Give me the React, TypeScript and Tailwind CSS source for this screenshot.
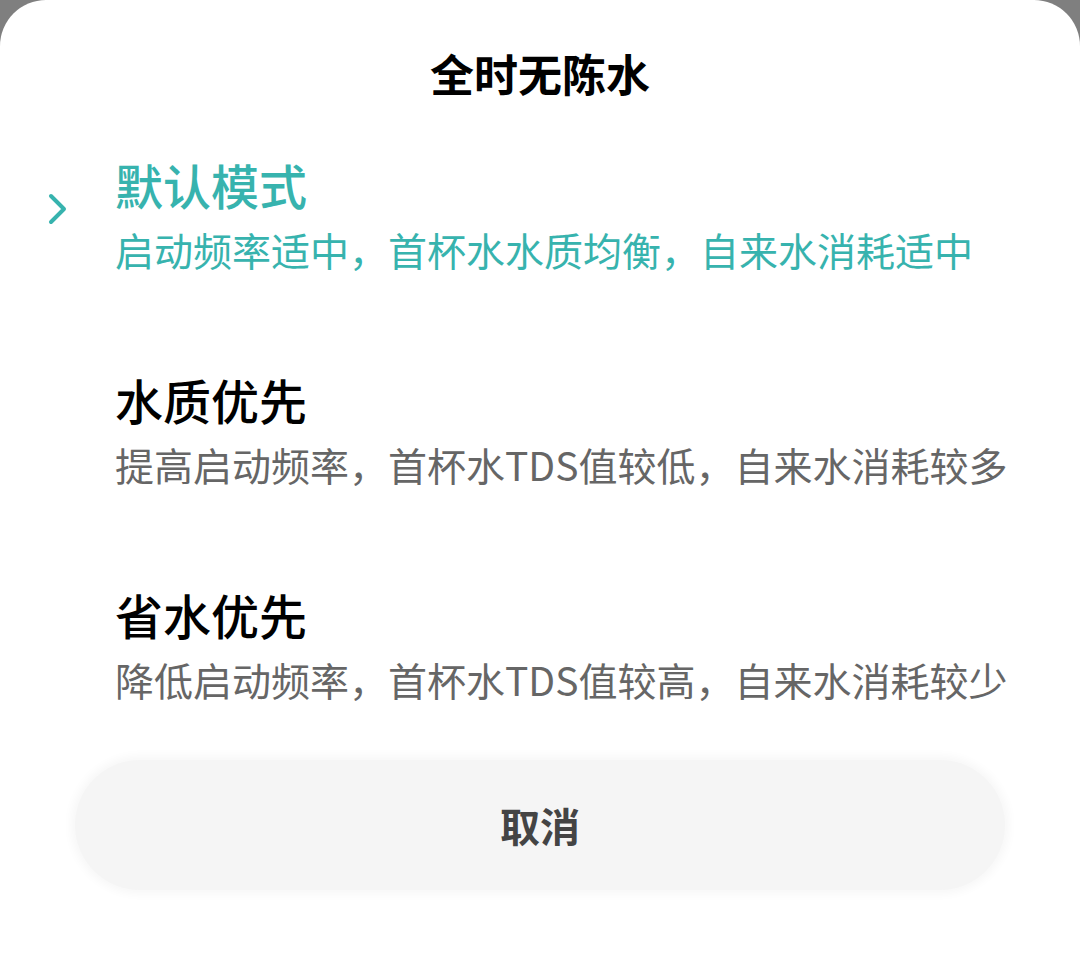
import React from 'react';

interface Mode {
  id: string;
  title: string;
  desc: string;
}

const modes: Mode[] = [
  { id: 'default', title: '默认模式', desc: '启动频率适中，首杯水水质均衡，自来水消耗适中' },
  { id: 'quality', title: '水质优先', desc: '提高启动频率，首杯水TDS值较低，自来水消耗较多' },
  { id: 'saving', title: '省水优先', desc: '降低启动频率，首杯水TDS值较高，自来水消耗较少' },
];

const font = { fontFamily: '"Noto Sans CJK SC", "Noto Sans", sans-serif' };

export default function App() {
  const selected = 'default';

  return (
    <div className="bg-[#7f7f7f] w-[1080px] h-[965px]" style={font}>
      <div className="bg-white rounded-t-[46px] h-full flex flex-col">
        {/* Title */}
        <h1 className="pt-[45px] h-[117px] text-center text-[44px] leading-[56px] font-bold text-black">
          全时无陈水
        </h1>

        {/* Mode list */}
        <div className="flex flex-col gap-[88px] mt-[35px]">
          {modes.map((m) => {
            const active = m.id === selected;
            return (
              <div key={m.id} className="flex">
                <div className="w-[115px] pl-[46px] pt-[40px]">
                  {active && (
                    <svg width="24" height="34" viewBox="0 0 24 34" fill="none">
                      <path d="M5 4 L18 17 L5 30" stroke="#37b3ae" strokeWidth="4" strokeLinecap="round" strokeLinejoin="round" />
                    </svg>
                  )}
                </div>
                <div className="flex flex-col">
                  <div className={`text-[48px] leading-[64px] font-medium ${active ? 'text-[#37b3ae]' : 'text-black'}`}>
                    {m.title}
                  </div>
                  <div className={`mt-[3px] text-[39px] leading-[60px] ${active ? 'text-[#37b3ae]' : 'text-[#666666]'}`}>
                    {m.desc}
                  </div>
                </div>
              </div>
            );
          })}
        </div>

        {/* Cancel */}
        <div className="px-[75px] mt-[51px]">
          <button className="w-full h-[130px] rounded-full bg-[#f5f5f5] shadow-[0_0_10px_4px_#f7f7f7] text-[40px] font-bold text-[#444444]" style={font}>
            取消
          </button>
        </div>
      </div>
    </div>
  );
}
